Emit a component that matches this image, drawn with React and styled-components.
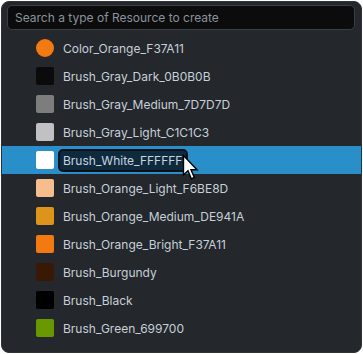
import React from "react"
import styled, { createGlobalStyle } from "styled-components"

const resources = [
	{ name: "Color_Orange_F37A11", color: "#f37a11", round: true },
	{ name: "Brush_Gray_Dark_0B0B0B", color: "#0b0b0b" },
	{ name: "Brush_Gray_Medium_7D7D7D", color: "#7d7d7d" },
	{ name: "Brush_Gray_Light_C1C1C3", color: "#c1c1c3" },
	{ name: "Brush_White_FFFFFF", color: "#ffffff", selected: true },
	{ name: "Brush_Orange_Light_F6BE8D", color: "#f6be8d" },
	{ name: "Brush_Orange_Medium_DE941A", color: "#de941a" },
	{ name: "Brush_Orange_Bright_F37A11", color: "#f37a11" },
	{ name: "Brush_Burgundy", color: "#3a1806" },
	{ name: "Brush_Black", color: "#000000" },
	{ name: "Brush_Green_699700", color: "#699700" },
]

function Cursor() {
	return (
		<CursorIcon width="17" height="27" viewBox="0 0 17 27">
			<path
				d="M1.5 1.5 L1.5 21 L6 16.8 L9.3 24.8 L12.3 23.5 L9 15.8 L15 15.8 Z"
				fill="#fff"
				stroke="#000"
				strokeWidth="1.4"
				strokeLinejoin="miter"
			/>
		</CursorIcon>
	)
}

function App() {
	return (
		<>
			<GlobalStyle />
			<Panel>
				<Search placeholder="Search a type of Resource to create" />
				<List>
					{resources.map(r => (
						<Row key={r.name} $selected={r.selected}>
							<Swatch $color={r.color} $round={r.round} />
							{r.selected ? (
								<EditBox>
									{r.name}
									<Cursor />
								</EditBox>
							) : (
								<Label>{r.name}</Label>
							)}
						</Row>
					))}
				</List>
			</Panel>
		</>
	)
}

export default App

const GlobalStyle = createGlobalStyle`
	body {
		margin: 0;
		background: #ffffff;
		font-family: Inter, "Noto Sans", sans-serif;
	}
	input::placeholder {
		color: #8b929b;
	}
`
const Panel = styled.div`
	box-sizing: border-box;
	width: 361px;
	height: 352px;
	margin: 1px;
	background: #24272b;
	border: 1px solid #2e3135;
	border-radius: 8px;
	display: flex;
	flex-direction: column;
	overflow: hidden;
`
const Search = styled.input`
	box-sizing: border-box;
	height: 25px;
	margin: 3px 6px 0 5px;
	padding: 0 7px;
	background: #0c0c0d;
	border: 1px solid #3b3f45;
	border-radius: 5px;
	color: #c8d0d8;
	font-family: Inter, "Noto Sans", sans-serif;
	font-size: 12px;
	outline: none;
`
const List = styled.ul`
	list-style: none;
	margin: 4px 0 0;
	padding: 0;
`
const Row = styled.li`
	height: 28px;
	display: flex;
	align-items: center;
	padding-left: 34px;
	background: ${p => (p.$selected ? "#2a8fc8" : "transparent")};
`
const Swatch = styled.span`
	width: 18px;
	height: 18px;
	flex: none;
	background: ${p => p.$color};
	border-radius: ${p => (p.$round ? "50%" : "2px")};
`
const Label = styled.span`
	margin-left: 9px;
	font-size: 12px;
	color: #c6d0da;
	white-space: nowrap;
`
const EditBox = styled.span`
	position: relative;
	box-sizing: border-box;
	height: 23px;
	margin-left: 4px;
	padding: 0 4px 0 3px;
	display: flex;
	align-items: center;
	background: #0f2a3c;
	border: 2px solid #0b1118;
	border-radius: 5px;
	font-size: 12px;
	color: #c8d4e0;
	white-space: nowrap;
`
const CursorIcon = styled.svg`
	position: absolute;
	left: calc(100% - 4px);
	top: 3px;
`
